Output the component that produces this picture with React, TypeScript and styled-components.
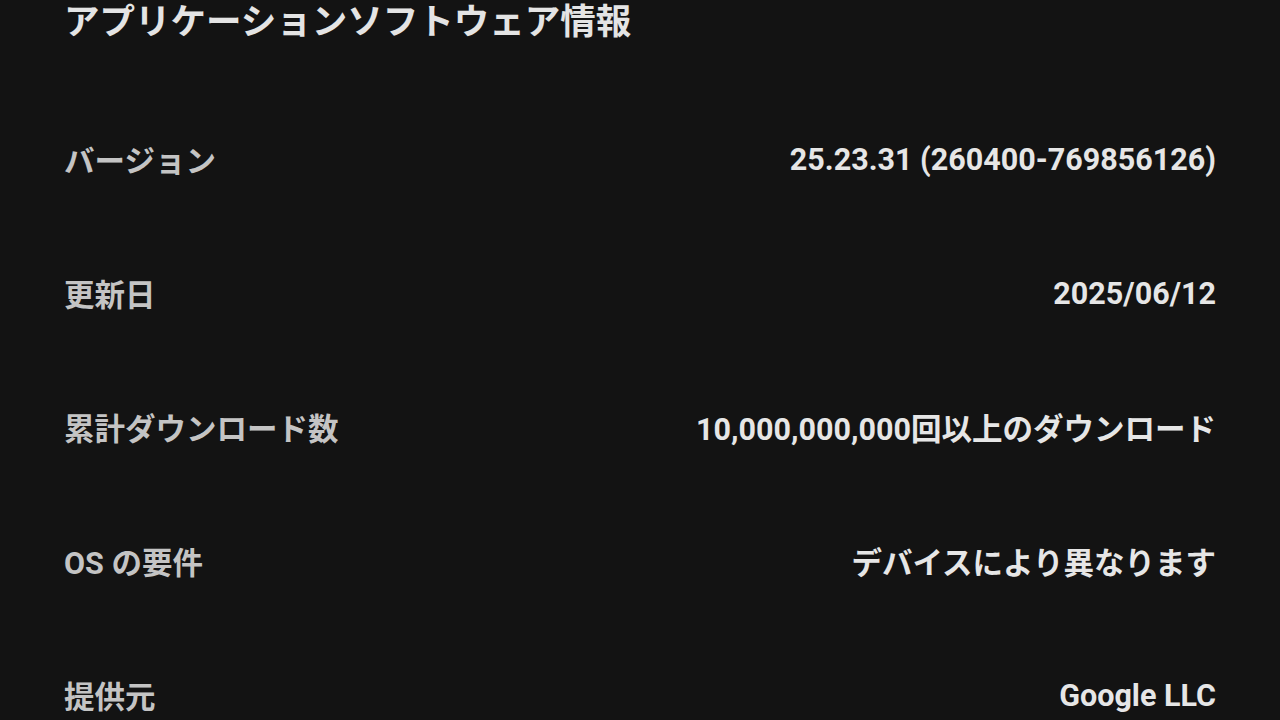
import * as React from "react";
import styled, { createGlobalStyle } from "styled-components";

const GlobalStyle = createGlobalStyle`
  html, body {
    margin: 0;
    padding: 0;
    background: #131313;
  }
  body {
    font-family: Roboto, "Noto Sans CJK JP", sans-serif;
    -webkit-font-smoothing: antialiased;
  }
`;

const Page = styled.div`
  width: 1280px;
  height: 720px;
  overflow: hidden;
  background: #131313;
  padding: 0 64px;
  box-sizing: border-box;
`;

const Title = styled.h1`
  margin: 0;
  height: 46px;
  line-height: 46px;
  margin-top: -1px;
  font-size: 35.5px;
  font-weight: 700;
  color: #e4e4e4;
  white-space: nowrap;
`;

const List = styled.dl`
  margin: 0;
  padding-top: 64px;
  display: grid;
  grid-auto-rows: 100px;
  row-gap: 34px;
`;

const Row = styled.div`
  display: flex;
  align-items: center;
  justify-content: space-between;
`;

const Label = styled.dt`
  font-size: 30.5px;
  font-weight: 700;
  color: #c4c4c4;
`;

const Value = styled.dd`
  margin: 0;
  font-size: 30.5px;
  font-weight: 700;
  color: #e6e6e6;
  text-align: right;
`;

const rows = [
  ["バージョン", "25.23.31 (260400-769856126)"],
  ["更新日", "2025/06/12"],
  ["累計ダウンロード数", "10,000,000,000回以上のダウンロード"],
  ["OS の要件", "デバイスにより異なります"],
  ["提供元", "Google LLC"],
];

const App: React.FC = () => {
  return (
    <Page>
      <GlobalStyle />
      <Title>アプリケーションソフトウェア情報</Title>
      <List>
        {rows.map(([label, value]) => (
          <Row key={label}>
            <Label>{label}</Label>
            <Value>{value}</Value>
          </Row>
        ))}
      </List>
    </Page>
  );
};

export default App;
